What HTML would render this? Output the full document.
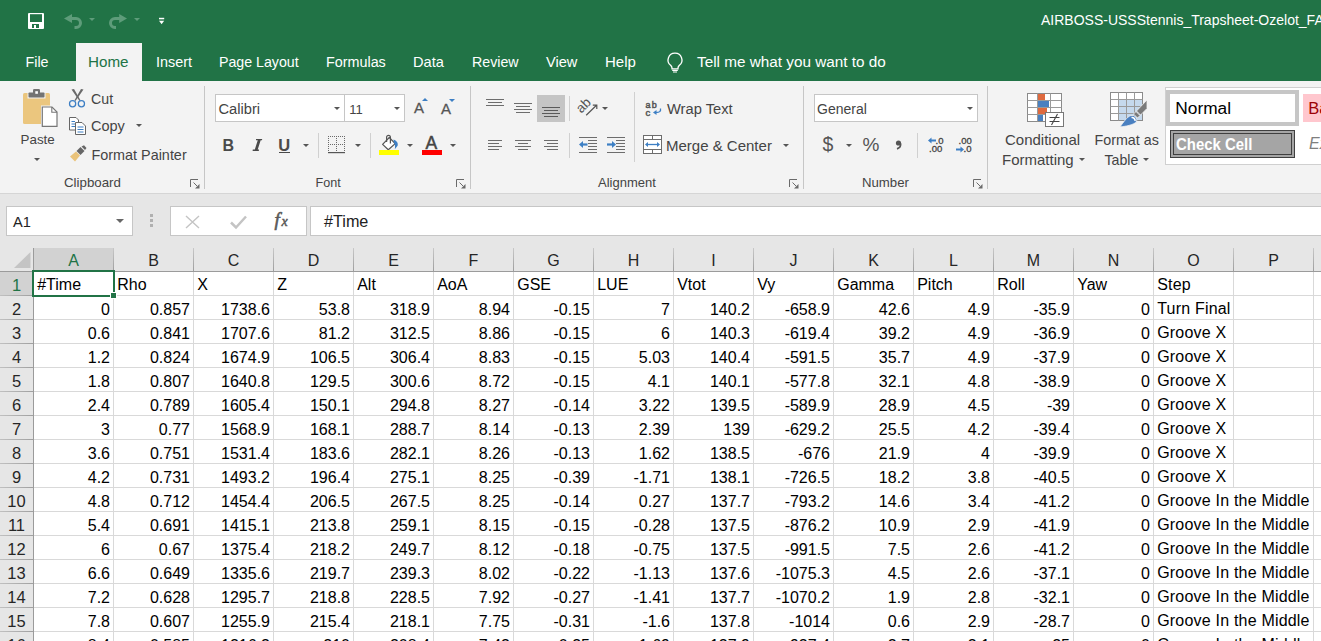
<!DOCTYPE html><html><head><meta charset="utf-8"><style>
html,body{margin:0;padding:0;}
body{width:1321px;height:641px;overflow:hidden;position:relative;background:#fff;font-family:"Liberation Sans",sans-serif;}
.t{position:absolute;white-space:nowrap;line-height:0;}
.r{position:absolute;}
.s{position:absolute;overflow:visible;}
</style></head><body>
<div class="r" style="left:0px;top:0px;width:1321px;height:81px;background:#217346;"></div>
<svg class="s" style="left:28px;top:13px;" width="16" height="16" viewBox="0 0 16 16"><path d="M1 0H15A1 1 0 0 1 16 1V15A1 1 0 0 1 15 16H1A1 1 0 0 1 0 15V1A1 1 0 0 1 1 0Z" fill="#fff"/><rect x="2" y="1.2" width="12" height="7.8" fill="#217346"/><rect x="4" y="11" width="7" height="4" fill="#217346"/><rect x="6" y="12" width="2" height="3" fill="#fff"/></svg>
<svg class="s" style="left:60px;top:10px;" width="26" height="22" viewBox="0 0 26 22"><path d="M11 8.5H16A4.5 4.5 0 0 1 16 17.5H14.5" fill="none" stroke="#5e9c7a" stroke-width="3"/><path d="M4 8.5L12 4V13Z" fill="#5e9c7a"/></svg>
<svg class="s" style="left:89.0px;top:18px;" width="6" height="3.0" viewBox="0 0 6 3.0"><path d="M0 0H6L3.0 3.0Z" fill="#5e9c7a"/></svg>
<svg class="s" style="left:104px;top:10px;" width="26" height="22" viewBox="0 0 26 22"><path d="M16 8.5H11A4.5 4.5 0 0 0 11 17.5H12" fill="none" stroke="#5e9c7a" stroke-width="3"/><path d="M23 8.5L15.2 4V13Z" fill="#5e9c7a"/></svg>
<svg class="s" style="left:134.0px;top:18px;" width="6" height="3.0" viewBox="0 0 6 3.0"><path d="M0 0H6L3.0 3.0Z" fill="#5e9c7a"/></svg>
<svg class="s" style="left:158px;top:17px;" width="7" height="8" viewBox="0 0 7 8"><rect x="1" y="0.8" width="5.2" height="1.5" fill="#fff"/><path d="M1 3.8H6.2L3.6 7.2Z" fill="#fff"/></svg>
<div class="t" style="left:1041px;top:19.65px;font-size:14px;color:#ffffff;">AIRBOSS-USSStennis_Trapsheet-Ozelot_FAC</div>
<div class="r" style="left:76px;top:43px;width:66px;height:38px;background:#f3f3f3;"></div>
<div class="t" style="left:25.5px;top:62.35px;font-size:14.3px;color:#ffffff;">File</div>
<div class="t" style="left:88px;top:62.03px;font-size:15.2px;color:#217346;">Home</div>
<div class="t" style="left:156px;top:62.31px;font-size:14.4px;color:#ffffff;">Insert</div>
<div class="t" style="left:219px;top:62.38px;font-size:14.2px;color:#ffffff;">Page Layout</div>
<div class="t" style="left:326px;top:62.33px;font-size:14.35px;color:#ffffff;">Formulas</div>
<div class="t" style="left:413px;top:62.24px;font-size:14.6px;color:#ffffff;">Data</div>
<div class="t" style="left:472px;top:62.38px;font-size:14.2px;color:#ffffff;">Review</div>
<div class="t" style="left:546px;top:62.24px;font-size:14.6px;color:#ffffff;">View</div>
<div class="t" style="left:605px;top:62.10px;font-size:15px;color:#ffffff;">Help</div>
<svg class="s" style="left:666px;top:52px;" width="18" height="21" viewBox="0 0 18 21"><path d="M9 1.2A6.8 6.8 0 0 0 4.6 13.3C5.6 14.3 6 15 6 16V16.8H12V16C12 15 12.4 14.3 13.4 13.3A6.8 6.8 0 0 0 9 1.2Z" fill="none" stroke="#fff" stroke-width="1.3"/><path d="M6.2 18.3H11.8M7 20H11" stroke="#fff" stroke-width="1.2"/></svg>
<div class="t" style="left:697px;top:62.00px;font-size:15.3px;color:#ffffff;">Tell me what you want to do</div>
<div class="r" style="left:0px;top:81px;width:1321px;height:112px;background:#f3f3f3;"></div>
<div class="r" style="left:0px;top:193px;width:1321px;height:1px;background:#d5d5d5;"></div>
<div class="r" style="left:0px;top:194px;width:1321px;height:54px;background:#e6e6e6;"></div>
<div class="r" style="left:204px;top:86px;width:1px;height:103px;background:#c6c6c6;"></div>
<div class="r" style="left:470px;top:86px;width:1px;height:103px;background:#c6c6c6;"></div>
<div class="r" style="left:803px;top:86px;width:1px;height:103px;background:#c6c6c6;"></div>
<div class="r" style="left:987px;top:86px;width:1px;height:103px;background:#c6c6c6;"></div>
<div class="t" style="left:64px;top:182.99px;font-size:13.3px;color:#444444;">Clipboard</div>
<div class="t" style="left:315.5px;top:183.23px;font-size:12.6px;color:#444444;">Font</div>
<div class="t" style="left:598px;top:183.10px;font-size:13px;color:#444444;">Alignment</div>
<div class="t" style="left:862px;top:183.03px;font-size:13.2px;color:#444444;">Number</div>
<svg class="s" style="left:190px;top:179px;" width="10" height="10" viewBox="0 0 10 10"><path d="M0.5 8V0.5H8" fill="none" stroke="#6a6a6a" stroke-width="1"/><path d="M3.5 3.5L7 7" stroke="#6a6a6a" stroke-width="1"/><path d="M5 9.5H9.5V5Z" fill="#6a6a6a"/></svg>
<svg class="s" style="left:456px;top:179px;" width="10" height="10" viewBox="0 0 10 10"><path d="M0.5 8V0.5H8" fill="none" stroke="#6a6a6a" stroke-width="1"/><path d="M3.5 3.5L7 7" stroke="#6a6a6a" stroke-width="1"/><path d="M5 9.5H9.5V5Z" fill="#6a6a6a"/></svg>
<svg class="s" style="left:789px;top:179px;" width="10" height="10" viewBox="0 0 10 10"><path d="M0.5 8V0.5H8" fill="none" stroke="#6a6a6a" stroke-width="1"/><path d="M3.5 3.5L7 7" stroke="#6a6a6a" stroke-width="1"/><path d="M5 9.5H9.5V5Z" fill="#6a6a6a"/></svg>
<svg class="s" style="left:973px;top:179px;" width="10" height="10" viewBox="0 0 10 10"><path d="M0.5 8V0.5H8" fill="none" stroke="#6a6a6a" stroke-width="1"/><path d="M3.5 3.5L7 7" stroke="#6a6a6a" stroke-width="1"/><path d="M5 9.5H9.5V5Z" fill="#6a6a6a"/></svg>
<svg class="s" style="left:22px;top:88px;" width="37" height="40" viewBox="0 0 37 40"><rect x="1" y="5" width="27" height="31" rx="1.5" fill="#ebc67e"/><path d="M5.5 4.5H23.5V10.5H5.5Z" fill="#f3f3f3"/><rect x="6.5" y="4.5" width="16" height="5" rx="0.8" fill="#737373"/><rect x="11" y="1" width="7" height="6" rx="1.2" fill="#737373"/><rect x="13.3" y="3.2" width="2.6" height="2.6" fill="#fff"/><path d="M19 17.5H30.5L36 23V39.5H19Z" fill="#f3f3f3"/><path d="M20.3 19H30L35 24V38.3H20.3Z" fill="#fff" stroke="#777" stroke-width="1.2"/><path d="M29.8 19V24.2H35" fill="none" stroke="#777" stroke-width="1.1"/></svg>
<div class="t" style="left:20.5px;top:139.96px;font-size:13.4px;color:#444444;">Paste</div>
<svg class="s" style="left:34.0px;top:158px;" width="6" height="3.0" viewBox="0 0 6 3.0"><path d="M0 0H6L3.0 3.0Z" fill="#555"/></svg>
<svg class="s" style="left:68px;top:88px;" width="19" height="20" viewBox="0 0 19 20"><path d="M3.5 1.5L6 1L12.5 12.3L11.5 13Z" fill="#6a6a6a"/><path d="M15.5 1.5L13 1L6.5 12.3L7.5 13Z" fill="#6a6a6a"/><circle cx="4.6" cy="15.7" r="3.1" fill="none" stroke="#3d7fc4" stroke-width="1.25"/><circle cx="13.4" cy="15.7" r="3.1" fill="none" stroke="#3d7fc4" stroke-width="1.25"/></svg>
<div class="t" style="left:91px;top:99.08px;font-size:14.2px;color:#444444;">Cut</div>
<svg class="s" style="left:68px;top:116px;" width="19" height="20" viewBox="0 0 19 20"><path d="M1.5 1.5H8L10.5 4V14H1.5Z" fill="#fff" stroke="#666"/><path d="M7.5 6.5H14L17.5 10V18.5H7.5Z" fill="#fff" stroke="#666"/><path d="M3.5 5.5H7M3.5 8H7M3.5 10.5H7M9.5 11H15.5M9.5 13.5H15.5M9.5 16H15.5" stroke="#3d7fc4" stroke-width="1"/></svg>
<div class="t" style="left:91px;top:126.48px;font-size:14.5px;color:#444444;">Copy</div>
<svg class="s" style="left:135.5px;top:124px;" width="6" height="3.0" viewBox="0 0 6 3.0"><path d="M0 0H6L3.0 3.0Z" fill="#555"/></svg>
<svg class="s" style="left:69px;top:145px;" width="18" height="17" viewBox="0 0 18 17"><path d="M1 11.5L7 6.5L11 10.5L6 16.5Z" fill="#eac37a"/><path d="M7.5 6L11.5 2L15.5 6L11.5 10Z" fill="#666"/><path d="M12.5 1.5L15 0.2L17.5 3L16 5Z" fill="#666"/></svg>
<div class="t" style="left:91.5px;top:154.51px;font-size:14.4px;color:#444444;">Format Painter</div>
<div class="r" style="left:215px;top:94px;width:130px;height:28px;background:#fff;box-sizing:border-box;border:1px solid #c6c6c6;"></div>
<div class="r" style="left:344px;top:94px;width:61px;height:28px;background:#fff;box-sizing:border-box;border:1px solid #c6c6c6;"></div>
<div class="t" style="left:218.5px;top:108.91px;font-size:14.7px;color:#444444;">Calibri</div>
<svg class="s" style="left:334.0px;top:107px;" width="6" height="3.0" viewBox="0 0 6 3.0"><path d="M0 0H6L3.0 3.0Z" fill="#555"/></svg>
<div class="t" style="left:349.3px;top:109.50px;font-size:13px;color:#444444;">11</div>
<svg class="s" style="left:394.0px;top:107px;" width="6" height="3.0" viewBox="0 0 6 3.0"><path d="M0 0H6L3.0 3.0Z" fill="#555"/></svg>
<div class="t" style="left:414px;top:108.10px;font-size:15px;color:#555;-webkit-text-stroke:0.3px #555;">A</div>
<svg class="s" style="left:422px;top:98px;" width="6" height="3" viewBox="0 0 6 3"><path d="M0 3H6L3 0Z" fill="#3d7fc4"/></svg>
<div class="t" style="left:441px;top:108.60px;font-size:15px;color:#555;-webkit-text-stroke:0.3px #555;">A</div>
<svg class="s" style="left:449.3px;top:99px;" width="6" height="3" viewBox="0 0 6 3"><path d="M0 0H6L3 3Z" fill="#3d7fc4"/></svg>
<div class="t" style="left:222.5px;top:146.26px;font-size:16px;color:#4a4a4a;font-weight:bold;">B</div>
<svg class="s" style="left:252px;top:138px;" width="11" height="14" viewBox="0 0 11 14"><path d="M4 1H10.2L10 2.3H4Z M0.8 11.6H7L6.8 12.9H0.6Z M6 1.5H8.9L5.4 12.4H2.5Z" fill="#4a4a4a"/></svg>
<div class="t" style="left:278.3px;top:144.88px;font-size:16.5px;color:#4a4a4a;font-weight:bold;">U</div>
<div class="r" style="left:279px;top:152px;width:11px;height:1px;background:#4a4a4a;"></div>
<svg class="s" style="left:303.0px;top:144px;" width="6" height="3.0" viewBox="0 0 6 3.0"><path d="M0 0H6L3.0 3.0Z" fill="#555"/></svg>
<div class="r" style="left:318px;top:133px;width:1px;height:25px;background:#d0d0d0;"></div>
<svg class="s" style="left:328px;top:136px;" width="18" height="17" viewBox="0 0 18 17"><g fill="#6a6a6a"><rect x="0" y="0" width="1" height="1"/><rect x="0" y="8" width="1" height="1"/><rect x="2" y="0" width="1" height="1"/><rect x="2" y="8" width="1" height="1"/><rect x="4" y="0" width="1" height="1"/><rect x="4" y="8" width="1" height="1"/><rect x="6" y="0" width="1" height="1"/><rect x="6" y="8" width="1" height="1"/><rect x="8" y="0" width="1" height="1"/><rect x="8" y="8" width="1" height="1"/><rect x="10" y="0" width="1" height="1"/><rect x="10" y="8" width="1" height="1"/><rect x="12" y="0" width="1" height="1"/><rect x="12" y="8" width="1" height="1"/><rect x="14" y="0" width="1" height="1"/><rect x="14" y="8" width="1" height="1"/><rect x="16" y="0" width="1" height="1"/><rect x="16" y="8" width="1" height="1"/><rect x="0" y="2" width="1" height="1"/><rect x="8" y="2" width="1" height="1"/><rect x="16" y="2" width="1" height="1"/><rect x="0" y="4" width="1" height="1"/><rect x="8" y="4" width="1" height="1"/><rect x="16" y="4" width="1" height="1"/><rect x="0" y="6" width="1" height="1"/><rect x="8" y="6" width="1" height="1"/><rect x="16" y="6" width="1" height="1"/><rect x="0" y="10" width="1" height="1"/><rect x="8" y="10" width="1" height="1"/><rect x="16" y="10" width="1" height="1"/><rect x="0" y="12" width="1" height="1"/><rect x="8" y="12" width="1" height="1"/><rect x="16" y="12" width="1" height="1"/><rect x="0" y="14" width="1" height="1"/><rect x="8" y="14" width="1" height="1"/><rect x="16" y="14" width="1" height="1"/></g><rect x="0" y="16" width="17" height="1.2" fill="#555"/></svg>
<svg class="s" style="left:355.0px;top:144px;" width="6" height="3.0" viewBox="0 0 6 3.0"><path d="M0 0H6L3.0 3.0Z" fill="#555"/></svg>
<div class="r" style="left:370px;top:133px;width:1px;height:25px;background:#d0d0d0;"></div>
<svg class="s" style="left:379px;top:133px;" width="21" height="22" viewBox="0 0 21 22"><path d="M3.6 11.4L10.3 4.5L16.2 10.6L9.3 16.8Z" fill="#fff" stroke="#555" stroke-width="1.2" stroke-linejoin="round"/><path d="M7.6 9V4.3A1.9 1.9 0 0 1 11.4 4.3V10.5" fill="none" stroke="#555" stroke-width="1.2"/><path d="M14.5 6.5C17.5 7.5 19.5 10 18.6 12.8L15.8 16.2C16.4 13.5 16 11 14.8 9.3Z" fill="#3d7fc4"/><rect x="0" y="17" width="20" height="5" fill="#ffff00"/></svg>
<svg class="s" style="left:407.0px;top:144px;" width="6" height="3.0" viewBox="0 0 6 3.0"><path d="M0 0H6L3.0 3.0Z" fill="#555"/></svg>
<div class="t" style="left:425.5px;top:142.94px;font-size:17.5px;color:#444;-webkit-text-stroke:0.5px #444;">A</div>
<div class="r" style="left:422px;top:150px;width:20px;height:5px;background:#ff0000;"></div>
<svg class="s" style="left:450.0px;top:144px;" width="6" height="3.0" viewBox="0 0 6 3.0"><path d="M0 0H6L3.0 3.0Z" fill="#555"/></svg>
<div class="r" style="left:486px;top:99px;width:18px;height:1px;background:#6d6d6d;"></div>
<div class="r" style="left:488px;top:102px;width:14px;height:1px;background:#6d6d6d;"></div>
<div class="r" style="left:486px;top:105px;width:18px;height:1px;background:#6d6d6d;"></div>
<div class="r" style="left:514px;top:103px;width:18px;height:1px;background:#6d6d6d;"></div>
<div class="r" style="left:516px;top:106px;width:14px;height:1px;background:#6d6d6d;"></div>
<div class="r" style="left:514px;top:109px;width:18px;height:1px;background:#6d6d6d;"></div>
<div class="r" style="left:516px;top:112px;width:14px;height:1px;background:#6d6d6d;"></div>
<div class="r" style="left:537px;top:95px;width:28px;height:27px;background:#c5c5c5;"></div>
<div class="r" style="left:542px;top:107px;width:18px;height:1px;background:#5a5a5a;"></div>
<div class="r" style="left:544px;top:110px;width:14px;height:1px;background:#5a5a5a;"></div>
<div class="r" style="left:542px;top:113px;width:18px;height:1px;background:#5a5a5a;"></div>
<div class="r" style="left:544px;top:116px;width:14px;height:1px;background:#5a5a5a;"></div>
<div class="r" style="left:569px;top:96px;width:1px;height:25px;background:#d0d0d0;"></div>
<svg class="s" style="left:576px;top:97px;" width="24" height="20" viewBox="0 0 24 20"><text x="0" y="0" font-family="Liberation Sans" font-size="13.5" fill="#555" transform="translate(5.2 16.8) rotate(-45)" style="-webkit-text-stroke:0.6px #555">ab</text><path d="M10.2 18.3L20.5 8.2M16.8 8.2H20.8V12" fill="none" stroke="#555" stroke-width="1.2"/></svg>
<svg class="s" style="left:602.0px;top:107px;" width="6" height="3.0" viewBox="0 0 6 3.0"><path d="M0 0H6L3.0 3.0Z" fill="#555"/></svg>
<div class="r" style="left:488px;top:140px;width:14px;height:1px;background:#6d6d6d;"></div>
<div class="r" style="left:488px;top:143px;width:11px;height:1px;background:#6d6d6d;"></div>
<div class="r" style="left:488px;top:146px;width:14px;height:1px;background:#6d6d6d;"></div>
<div class="r" style="left:488px;top:149px;width:11px;height:1px;background:#6d6d6d;"></div>
<div class="r" style="left:515px;top:140px;width:16px;height:1px;background:#6d6d6d;"></div>
<div class="r" style="left:518px;top:143px;width:10px;height:1px;background:#6d6d6d;"></div>
<div class="r" style="left:515px;top:146px;width:16px;height:1px;background:#6d6d6d;"></div>
<div class="r" style="left:518px;top:149px;width:10px;height:1px;background:#6d6d6d;"></div>
<div class="r" style="left:544px;top:140px;width:14px;height:1px;background:#6d6d6d;"></div>
<div class="r" style="left:547px;top:143px;width:11px;height:1px;background:#6d6d6d;"></div>
<div class="r" style="left:544px;top:146px;width:14px;height:1px;background:#6d6d6d;"></div>
<div class="r" style="left:547px;top:149px;width:11px;height:1px;background:#6d6d6d;"></div>
<div class="r" style="left:569px;top:133px;width:1px;height:25px;background:#d0d0d0;"></div>
<div class="r" style="left:579px;top:137px;width:18px;height:1px;background:#6d6d6d;"></div>
<div class="r" style="left:588px;top:140px;width:9px;height:1px;background:#6d6d6d;"></div>
<div class="r" style="left:588px;top:143px;width:9px;height:1px;background:#6d6d6d;"></div>
<div class="r" style="left:588px;top:146px;width:9px;height:1px;background:#6d6d6d;"></div>
<div class="r" style="left:588px;top:149px;width:9px;height:1px;background:#6d6d6d;"></div>
<div class="r" style="left:579px;top:152px;width:18px;height:1px;background:#6d6d6d;"></div>
<svg class="s" style="left:579px;top:141px;" width="9" height="7" viewBox="0 0 9 7"><path d="M0 3.5L4 0V7Z" fill="#3d7fc4"/><path d="M3 3.5H8.5" stroke="#3d7fc4" stroke-width="2.2"/></svg>
<div class="r" style="left:607px;top:137px;width:18px;height:1px;background:#6d6d6d;"></div>
<div class="r" style="left:616px;top:140px;width:9px;height:1px;background:#6d6d6d;"></div>
<div class="r" style="left:616px;top:143px;width:9px;height:1px;background:#6d6d6d;"></div>
<div class="r" style="left:616px;top:146px;width:9px;height:1px;background:#6d6d6d;"></div>
<div class="r" style="left:616px;top:149px;width:9px;height:1px;background:#6d6d6d;"></div>
<div class="r" style="left:607px;top:152px;width:18px;height:1px;background:#6d6d6d;"></div>
<svg class="s" style="left:607px;top:141px;" width="9" height="7" viewBox="0 0 9 7"><path d="M9 3.5L5 0V7Z" fill="#3d7fc4"/><path d="M0 3.5H6" stroke="#3d7fc4" stroke-width="2.2"/></svg>
<div class="r" style="left:634px;top:92px;width:1px;height:70px;background:#d0d0d0;"></div>
<div class="t" style="left:645.5px;top:104.68px;font-size:9px;color:#555;-webkit-text-stroke:0.5px #555;letter-spacing:1.3px;">ab</div>
<div class="t" style="left:645.5px;top:112.51px;font-size:9.5px;color:#555;-webkit-text-stroke:0.5px #555;">c</div>
<svg class="s" style="left:652px;top:108px;" width="10" height="7" viewBox="0 0 10 7"><path d="M8.5 0.5C9 3.5 7.5 4.5 4 4.5" fill="none" stroke="#3d7fc4" stroke-width="1.3"/><path d="M1 4.5L4.5 2V7Z" fill="#3d7fc4"/></svg>
<div class="t" style="left:667px;top:108.91px;font-size:14.7px;color:#444444;">Wrap Text</div>
<svg class="s" style="left:643px;top:135px;" width="19" height="19" viewBox="0 0 19 19"><rect x="0.5" y="0.5" width="18" height="18" fill="#fff" stroke="#6d6d6d"/><path d="M0.5 4.5H18.5M0.5 14.5H18.5M9.5 0.5V4.5M9.5 14.5V18.5" stroke="#6d6d6d" stroke-width="1"/><path d="M4 9.5H15" stroke="#3d7fc4" stroke-width="1.3"/><path d="M2 9.5L5 7V12ZM17 9.5L14 7V12Z" fill="#3d7fc4"/></svg>
<div class="t" style="left:666px;top:145.60px;font-size:15px;color:#444444;">Merge &amp; Center</div>
<svg class="s" style="left:783.0px;top:144px;" width="6" height="3.0" viewBox="0 0 6 3.0"><path d="M0 0H6L3.0 3.0Z" fill="#555"/></svg>
<div class="r" style="left:814px;top:94px;width:164px;height:28px;background:#fff;box-sizing:border-box;border:1px solid #c6c6c6;"></div>
<div class="t" style="left:817px;top:108.85px;font-size:14px;color:#444444;">General</div>
<svg class="s" style="left:966.5px;top:107px;" width="6" height="3.0" viewBox="0 0 6 3.0"><path d="M0 0H6L3.0 3.0Z" fill="#555"/></svg>
<div class="t" style="left:822.5px;top:144.24px;font-size:19.5px;color:#555;">$</div>
<svg class="s" style="left:846.0px;top:144px;" width="6" height="3.0" viewBox="0 0 6 3.0"><path d="M0 0H6L3.0 3.0Z" fill="#555"/></svg>
<div class="t" style="left:862.5px;top:145.42px;font-size:19px;color:#555;">%</div>
<svg class="s" style="left:895px;top:140px;" width="7" height="9" viewBox="0 0 7 9"><circle cx="3.5" cy="3" r="2.6" fill="#555"/><path d="M5.5 3.5C6 6 4.5 8 2 8.8" fill="none" stroke="#555" stroke-width="1.8"/></svg>
<div class="r" style="left:917px;top:133px;width:1px;height:25px;background:#d0d0d0;"></div>
<svg class="s" style="left:928px;top:137px;" width="8" height="7" viewBox="0 0 8 7"><path d="M0 3.5L3.5 0.5V6.5Z" fill="#3d7fc4"/><path d="M2.5 3.5H8" stroke="#3d7fc4" stroke-width="2"/></svg>
<div class="t" style="left:935.5px;top:140.91px;font-size:9.5px;color:#444;-webkit-text-stroke:0.3px #444;">.0</div>
<div class="t" style="left:929px;top:149.11px;font-size:9.5px;color:#444;-webkit-text-stroke:0.3px #444;">.00</div>
<div class="t" style="left:958.5px;top:140.91px;font-size:9.5px;color:#444;-webkit-text-stroke:0.3px #444;">.00</div>
<svg class="s" style="left:956px;top:146px;" width="8" height="7" viewBox="0 0 8 7"><path d="M8 3.5L4.5 0.5V6.5Z" fill="#3d7fc4"/><path d="M0 3.5H5.5" stroke="#3d7fc4" stroke-width="2"/></svg>
<div class="t" style="left:963.5px;top:149.11px;font-size:9.5px;color:#444;-webkit-text-stroke:0.3px #444;">.0</div>
<svg class="s" style="left:1027px;top:93px;" width="38" height="35" viewBox="0 0 38 35"><rect x="0.5" y="0.5" width="34" height="28" fill="#fff" stroke="#8a8a8a"/><rect x="11" y="1" width="7" height="6" fill="#df6a3f"/><rect x="11" y="8" width="11" height="6" fill="#4a80c0"/><rect x="11" y="15" width="9" height="6" fill="#df6a3f"/><rect x="11" y="22" width="5" height="6" fill="#4a80c0"/><path d="M0.5 7.5H34.5M0.5 14.5H34.5M0.5 21.5H34.5M10.5 0.5V28.5M23.5 0.5V28.5" stroke="#9a9a9a" stroke-width="1" fill="none"/><rect x="18.5" y="19.5" width="18" height="14" fill="#fff" stroke="#777"/><path d="M22.5 24.5H32.5M22.5 28.5H32.5M30.5 21L24.5 32" stroke="#444" stroke-width="1.1" fill="none"/></svg>
<div class="t" style="left:1005px;top:139.70px;font-size:15px;color:#444444;">Conditional</div>
<div class="t" style="left:1002px;top:159.50px;font-size:15px;color:#444444;">Formatting</div>
<svg class="s" style="left:1079.0px;top:158px;" width="6" height="3.0" viewBox="0 0 6 3.0"><path d="M0 0H6L3.0 3.0Z" fill="#555"/></svg>
<svg class="s" style="left:1110px;top:92px;" width="40" height="36" viewBox="0 0 40 36"><rect x="0.5" y="0.5" width="32" height="28" fill="#fff"/><rect x="8" y="7" width="25" height="22" fill="#c5d9ed"/><rect x="0.5" y="0.5" width="32" height="28" fill="none" stroke="#8a8a8a"/><path d="M0.5 7.5H32.5M0.5 14.5H32.5M0.5 21.5H32.5M8.5 0.5V28.5M16.5 0.5V28.5M24.5 0.5V28.5" stroke="#9a9a9a" stroke-width="1" fill="none"/><path d="M37 8L37 16.5L30.5 23L26.5 19Z" fill="#7a7a7a" stroke="#f3f3f3" stroke-width="0.8"/><path d="M26 19.5L30 23.5L27.5 26L23.5 22Z" fill="#7a7a7a" stroke="#f3f3f3" stroke-width="0.8"/><path d="M10 34.8C13.5 30.5 16.5 25 21 23.5A4.8 4.8 0 0 1 26.5 30C23 33 15.5 34.5 10 34.8Z" fill="#4a80c0" stroke="#f3f3f3" stroke-width="0.8"/><path d="M21.5 25.5A3 3 0 0 1 25 29" stroke="#fff" stroke-width="1.6" fill="none"/></svg>
<div class="t" style="left:1094.5px;top:139.95px;font-size:14.3px;color:#444444;">Format as</div>
<div class="t" style="left:1104.5px;top:159.78px;font-size:14.2px;color:#444444;">Table</div>
<svg class="s" style="left:1143.0px;top:158px;" width="6" height="3.0" viewBox="0 0 6 3.0"><path d="M0 0H6L3.0 3.0Z" fill="#555"/></svg>
<div class="r" style="left:1165px;top:87px;width:160px;height:78px;background:#fff;box-sizing:border-box;border:1px solid #d0d0d0;"></div>
<div class="r" style="left:1166px;top:90px;width:133px;height:36px;background:#fff;box-sizing:border-box;border:4px solid #c6c6c6;"></div>
<div class="t" style="left:1175.3px;top:108.31px;font-size:17.3px;color:#000;">Normal</div>
<div class="r" style="left:1303px;top:94px;width:30px;height:28px;background:#ffc7ce;"></div>
<div class="t" style="left:1308.3px;top:108.08px;font-size:16.5px;color:#9c0006;">Bad</div>
<div class="r" style="left:1170px;top:130px;width:125px;height:28px;background:#a5a5a5;box-sizing:border-box;border:4px double #3f3f3f;"></div>
<div class="t" style="left:1175.5px;top:144.08px;font-size:16.5px;color:#ffffff;font-weight:bold;transform:scaleX(0.905);transform-origin:0 0;">Check Cell</div>
<div class="t" style="left:1309px;top:144.26px;font-size:16px;color:#7f7f7f;font-style:italic;">Explanatory</div>
<div class="r" style="left:6px;top:206px;width:127px;height:30px;background:#fff;box-sizing:border-box;border:1px solid #c6c6c6;"></div>
<div class="t" style="left:13px;top:221.74px;font-size:14.6px;color:#222;">A1</div>
<svg class="s" style="left:116.0px;top:219px;" width="8" height="4.0" viewBox="0 0 8 4.0"><path d="M0 0H8L4.0 4.0Z" fill="#666"/></svg>
<div class="r" style="left:150px;top:214px;width:3px;height:3px;background:#b0b0b0;"></div>
<div class="r" style="left:150px;top:219px;width:3px;height:3px;background:#b0b0b0;"></div>
<div class="r" style="left:150px;top:224px;width:3px;height:3px;background:#b0b0b0;"></div>
<div class="r" style="left:170px;top:206px;width:137px;height:30px;background:#fff;box-sizing:border-box;border:1px solid #c6c6c6;"></div>
<svg class="s" style="left:185px;top:215px;" width="15" height="14" viewBox="0 0 15 14"><path d="M1 1L14 13M14 1L1 13" stroke="#c4c4c4" stroke-width="1.4"/></svg>
<svg class="s" style="left:230px;top:215px;" width="17" height="14" viewBox="0 0 17 14"><path d="M1 7.5L6 12.5L16 1.5" fill="none" stroke="#c4c4c4" stroke-width="2.5"/></svg>
<div class="t" style="left:274.5px;top:219.92px;font-size:19px;color:#5a5a5a;font-style:italic;font-family:'Liberation Serif',serif;-webkit-text-stroke:0.6px #5a5a5a;">f</div>
<div class="t" style="left:281.5px;top:221.65px;font-size:14px;color:#5a5a5a;font-style:italic;font-family:'Liberation Serif',serif;-webkit-text-stroke:0.5px #5a5a5a;">x</div>
<div class="r" style="left:310px;top:206px;width:1011px;height:30px;background:#fff;box-sizing:border-box;border:1px solid #c6c6c6;border-right:none;"></div>
<div class="t" style="left:324px;top:221.19px;font-size:16.2px;color:#222;">#Time</div>
<div class="r" style="left:0px;top:248px;width:1321px;height:23px;background:#e6e6e6;"></div>
<div class="r" style="left:0px;top:272px;width:33px;height:369px;background:#e6e6e6;"></div>
<div class="r" style="left:34px;top:272px;width:1287px;height:369px;background:#ffffff;"></div>
<div class="r" style="left:34px;top:248px;width:79px;height:23px;background:#d2d2d2;"></div>
<div class="r" style="left:0px;top:272px;width:33px;height:23px;background:#d2d2d2;"></div>
<svg class="s" style="left:14px;top:252px;" width="17" height="16" viewBox="0 0 17 16"><path d="M16.5 0V16H0Z" fill="#c4c4c4"/></svg>
<div class="r" style="left:113px;top:248px;width:1px;height:23px;background:linear-gradient(#c8c8c8,#9e9e9e);"></div>
<div class="t" style="left:-126.5px;width:400px;text-align:center;top:260.96px;font-size:16px;color:#217346;">A</div>
<div class="r" style="left:193px;top:248px;width:1px;height:23px;background:linear-gradient(#c8c8c8,#9e9e9e);"></div>
<div class="t" style="left:-46.5px;width:400px;text-align:center;top:260.96px;font-size:16px;color:#262626;">B</div>
<div class="r" style="left:273px;top:248px;width:1px;height:23px;background:linear-gradient(#c8c8c8,#9e9e9e);"></div>
<div class="t" style="left:33.5px;width:400px;text-align:center;top:260.96px;font-size:16px;color:#262626;">C</div>
<div class="r" style="left:353px;top:248px;width:1px;height:23px;background:linear-gradient(#c8c8c8,#9e9e9e);"></div>
<div class="t" style="left:113.5px;width:400px;text-align:center;top:260.96px;font-size:16px;color:#262626;">D</div>
<div class="r" style="left:433px;top:248px;width:1px;height:23px;background:linear-gradient(#c8c8c8,#9e9e9e);"></div>
<div class="t" style="left:193.5px;width:400px;text-align:center;top:260.96px;font-size:16px;color:#262626;">E</div>
<div class="r" style="left:513px;top:248px;width:1px;height:23px;background:linear-gradient(#c8c8c8,#9e9e9e);"></div>
<div class="t" style="left:273.5px;width:400px;text-align:center;top:260.96px;font-size:16px;color:#262626;">F</div>
<div class="r" style="left:593px;top:248px;width:1px;height:23px;background:linear-gradient(#c8c8c8,#9e9e9e);"></div>
<div class="t" style="left:353.5px;width:400px;text-align:center;top:260.96px;font-size:16px;color:#262626;">G</div>
<div class="r" style="left:673px;top:248px;width:1px;height:23px;background:linear-gradient(#c8c8c8,#9e9e9e);"></div>
<div class="t" style="left:433.5px;width:400px;text-align:center;top:260.96px;font-size:16px;color:#262626;">H</div>
<div class="r" style="left:753px;top:248px;width:1px;height:23px;background:linear-gradient(#c8c8c8,#9e9e9e);"></div>
<div class="t" style="left:513.5px;width:400px;text-align:center;top:260.96px;font-size:16px;color:#262626;">I</div>
<div class="r" style="left:833px;top:248px;width:1px;height:23px;background:linear-gradient(#c8c8c8,#9e9e9e);"></div>
<div class="t" style="left:593.5px;width:400px;text-align:center;top:260.96px;font-size:16px;color:#262626;">J</div>
<div class="r" style="left:913px;top:248px;width:1px;height:23px;background:linear-gradient(#c8c8c8,#9e9e9e);"></div>
<div class="t" style="left:673.5px;width:400px;text-align:center;top:260.96px;font-size:16px;color:#262626;">K</div>
<div class="r" style="left:993px;top:248px;width:1px;height:23px;background:linear-gradient(#c8c8c8,#9e9e9e);"></div>
<div class="t" style="left:753.5px;width:400px;text-align:center;top:260.96px;font-size:16px;color:#262626;">L</div>
<div class="r" style="left:1073px;top:248px;width:1px;height:23px;background:linear-gradient(#c8c8c8,#9e9e9e);"></div>
<div class="t" style="left:833.5px;width:400px;text-align:center;top:260.96px;font-size:16px;color:#262626;">M</div>
<div class="r" style="left:1153px;top:248px;width:1px;height:23px;background:linear-gradient(#c8c8c8,#9e9e9e);"></div>
<div class="t" style="left:913.5px;width:400px;text-align:center;top:260.96px;font-size:16px;color:#262626;">N</div>
<div class="r" style="left:1233px;top:248px;width:1px;height:23px;background:linear-gradient(#c8c8c8,#9e9e9e);"></div>
<div class="t" style="left:993.5px;width:400px;text-align:center;top:260.96px;font-size:16px;color:#262626;">O</div>
<div class="r" style="left:1313px;top:248px;width:1px;height:23px;background:linear-gradient(#c8c8c8,#9e9e9e);"></div>
<div class="t" style="left:1073.5px;width:400px;text-align:center;top:260.96px;font-size:16px;color:#262626;">P</div>
<div class="r" style="left:0px;top:271px;width:1321px;height:1px;background:#9b9b9b;"></div>
<div class="r" style="left:33px;top:248px;width:1px;height:393px;background:#9b9b9b;"></div>
<div class="r" style="left:34px;top:295px;width:1287px;height:1px;background:#d9d9d9;"></div>
<div class="r" style="left:0px;top:295px;width:33px;height:1px;background:linear-gradient(90deg,#c0c0c0,#a0a0a0);"></div>
<div class="r" style="left:34px;top:319px;width:1287px;height:1px;background:#d9d9d9;"></div>
<div class="r" style="left:0px;top:319px;width:33px;height:1px;background:linear-gradient(90deg,#c0c0c0,#a0a0a0);"></div>
<div class="r" style="left:34px;top:343px;width:1287px;height:1px;background:#d9d9d9;"></div>
<div class="r" style="left:0px;top:343px;width:33px;height:1px;background:linear-gradient(90deg,#c0c0c0,#a0a0a0);"></div>
<div class="r" style="left:34px;top:367px;width:1287px;height:1px;background:#d9d9d9;"></div>
<div class="r" style="left:0px;top:367px;width:33px;height:1px;background:linear-gradient(90deg,#c0c0c0,#a0a0a0);"></div>
<div class="r" style="left:34px;top:391px;width:1287px;height:1px;background:#d9d9d9;"></div>
<div class="r" style="left:0px;top:391px;width:33px;height:1px;background:linear-gradient(90deg,#c0c0c0,#a0a0a0);"></div>
<div class="r" style="left:34px;top:415px;width:1287px;height:1px;background:#d9d9d9;"></div>
<div class="r" style="left:0px;top:415px;width:33px;height:1px;background:linear-gradient(90deg,#c0c0c0,#a0a0a0);"></div>
<div class="r" style="left:34px;top:439px;width:1287px;height:1px;background:#d9d9d9;"></div>
<div class="r" style="left:0px;top:439px;width:33px;height:1px;background:linear-gradient(90deg,#c0c0c0,#a0a0a0);"></div>
<div class="r" style="left:34px;top:463px;width:1287px;height:1px;background:#d9d9d9;"></div>
<div class="r" style="left:0px;top:463px;width:33px;height:1px;background:linear-gradient(90deg,#c0c0c0,#a0a0a0);"></div>
<div class="r" style="left:34px;top:487px;width:1287px;height:1px;background:#d9d9d9;"></div>
<div class="r" style="left:0px;top:487px;width:33px;height:1px;background:linear-gradient(90deg,#c0c0c0,#a0a0a0);"></div>
<div class="r" style="left:34px;top:511px;width:1287px;height:1px;background:#d9d9d9;"></div>
<div class="r" style="left:0px;top:511px;width:33px;height:1px;background:linear-gradient(90deg,#c0c0c0,#a0a0a0);"></div>
<div class="r" style="left:34px;top:535px;width:1287px;height:1px;background:#d9d9d9;"></div>
<div class="r" style="left:0px;top:535px;width:33px;height:1px;background:linear-gradient(90deg,#c0c0c0,#a0a0a0);"></div>
<div class="r" style="left:34px;top:559px;width:1287px;height:1px;background:#d9d9d9;"></div>
<div class="r" style="left:0px;top:559px;width:33px;height:1px;background:linear-gradient(90deg,#c0c0c0,#a0a0a0);"></div>
<div class="r" style="left:34px;top:583px;width:1287px;height:1px;background:#d9d9d9;"></div>
<div class="r" style="left:0px;top:583px;width:33px;height:1px;background:linear-gradient(90deg,#c0c0c0,#a0a0a0);"></div>
<div class="r" style="left:34px;top:607px;width:1287px;height:1px;background:#d9d9d9;"></div>
<div class="r" style="left:0px;top:607px;width:33px;height:1px;background:linear-gradient(90deg,#c0c0c0,#a0a0a0);"></div>
<div class="r" style="left:34px;top:631px;width:1287px;height:1px;background:#d9d9d9;"></div>
<div class="r" style="left:0px;top:631px;width:33px;height:1px;background:linear-gradient(90deg,#c0c0c0,#a0a0a0);"></div>
<div class="r" style="left:34px;top:655px;width:1287px;height:1px;background:#d9d9d9;"></div>
<div class="r" style="left:0px;top:655px;width:33px;height:1px;background:linear-gradient(90deg,#c0c0c0,#a0a0a0);"></div>
<div class="r" style="left:113px;top:272px;width:1px;height:369px;background:#d9d9d9;"></div>
<div class="r" style="left:193px;top:272px;width:1px;height:369px;background:#d9d9d9;"></div>
<div class="r" style="left:273px;top:272px;width:1px;height:369px;background:#d9d9d9;"></div>
<div class="r" style="left:353px;top:272px;width:1px;height:369px;background:#d9d9d9;"></div>
<div class="r" style="left:433px;top:272px;width:1px;height:369px;background:#d9d9d9;"></div>
<div class="r" style="left:513px;top:272px;width:1px;height:369px;background:#d9d9d9;"></div>
<div class="r" style="left:593px;top:272px;width:1px;height:369px;background:#d9d9d9;"></div>
<div class="r" style="left:673px;top:272px;width:1px;height:369px;background:#d9d9d9;"></div>
<div class="r" style="left:753px;top:272px;width:1px;height:369px;background:#d9d9d9;"></div>
<div class="r" style="left:833px;top:272px;width:1px;height:369px;background:#d9d9d9;"></div>
<div class="r" style="left:913px;top:272px;width:1px;height:369px;background:#d9d9d9;"></div>
<div class="r" style="left:993px;top:272px;width:1px;height:369px;background:#d9d9d9;"></div>
<div class="r" style="left:1073px;top:272px;width:1px;height:369px;background:#d9d9d9;"></div>
<div class="r" style="left:1153px;top:272px;width:1px;height:369px;background:#d9d9d9;"></div>
<div class="r" style="left:1233px;top:272px;width:1px;height:216px;background:#d9d9d9;"></div>
<div class="r" style="left:1313px;top:272px;width:1px;height:369px;background:#d9d9d9;"></div>
<div class="t" style="left:-183.5px;width:400px;text-align:center;top:285.28px;font-size:16.5px;color:#217346;">1</div>
<div class="t" style="left:-183.5px;width:400px;text-align:center;top:309.28px;font-size:16.5px;color:#262626;">2</div>
<div class="t" style="left:-183.5px;width:400px;text-align:center;top:333.28px;font-size:16.5px;color:#262626;">3</div>
<div class="t" style="left:-183.5px;width:400px;text-align:center;top:357.28px;font-size:16.5px;color:#262626;">4</div>
<div class="t" style="left:-183.5px;width:400px;text-align:center;top:381.28px;font-size:16.5px;color:#262626;">5</div>
<div class="t" style="left:-183.5px;width:400px;text-align:center;top:405.28px;font-size:16.5px;color:#262626;">6</div>
<div class="t" style="left:-183.5px;width:400px;text-align:center;top:429.28px;font-size:16.5px;color:#262626;">7</div>
<div class="t" style="left:-183.5px;width:400px;text-align:center;top:453.28px;font-size:16.5px;color:#262626;">8</div>
<div class="t" style="left:-183.5px;width:400px;text-align:center;top:477.28px;font-size:16.5px;color:#262626;">9</div>
<div class="t" style="left:-183.5px;width:400px;text-align:center;top:501.28px;font-size:16.5px;color:#262626;">10</div>
<div class="t" style="left:-183.5px;width:400px;text-align:center;top:525.28px;font-size:16.5px;color:#262626;">11</div>
<div class="t" style="left:-183.5px;width:400px;text-align:center;top:549.28px;font-size:16.5px;color:#262626;">12</div>
<div class="t" style="left:-183.5px;width:400px;text-align:center;top:573.28px;font-size:16.5px;color:#262626;">13</div>
<div class="t" style="left:-183.5px;width:400px;text-align:center;top:597.28px;font-size:16.5px;color:#262626;">14</div>
<div class="t" style="left:-183.5px;width:400px;text-align:center;top:621.28px;font-size:16.5px;color:#262626;">15</div>
<div class="t" style="left:-183.5px;width:400px;text-align:center;top:645.28px;font-size:16.5px;color:#262626;">16</div>
<div class="t" style="left:37.2px;top:285.46px;font-size:16px;color:#000;">#Time</div>
<div class="t" style="left:117.2px;top:285.46px;font-size:16px;color:#000;">Rho</div>
<div class="t" style="left:197.2px;top:285.46px;font-size:16px;color:#000;">X</div>
<div class="t" style="left:277.2px;top:285.46px;font-size:16px;color:#000;">Z</div>
<div class="t" style="left:357.2px;top:285.46px;font-size:16px;color:#000;">Alt</div>
<div class="t" style="left:437.2px;top:285.46px;font-size:16px;color:#000;">AoA</div>
<div class="t" style="left:517.2px;top:285.46px;font-size:16px;color:#000;">GSE</div>
<div class="t" style="left:597.2px;top:285.46px;font-size:16px;color:#000;">LUE</div>
<div class="t" style="left:677.2px;top:285.46px;font-size:16px;color:#000;">Vtot</div>
<div class="t" style="left:757.2px;top:285.46px;font-size:16px;color:#000;">Vy</div>
<div class="t" style="left:837.2px;top:285.46px;font-size:16px;color:#000;">Gamma</div>
<div class="t" style="left:917.2px;top:285.46px;font-size:16px;color:#000;">Pitch</div>
<div class="t" style="left:997.2px;top:285.46px;font-size:16px;color:#000;">Roll</div>
<div class="t" style="left:1077.2px;top:285.46px;font-size:16px;color:#000;">Yaw</div>
<div class="t" style="left:1157.2px;top:285.46px;font-size:16px;color:#000;letter-spacing:0.2px;">Step</div>
<div class="t" style="right:1211px;top:309.96px;font-size:16px;color:#000;text-align:right;">0</div>
<div class="t" style="right:1131px;top:309.96px;font-size:16px;color:#000;text-align:right;">0.857</div>
<div class="t" style="right:1051px;top:309.96px;font-size:16px;color:#000;text-align:right;">1738.6</div>
<div class="t" style="right:971px;top:309.96px;font-size:16px;color:#000;text-align:right;">53.8</div>
<div class="t" style="right:891px;top:309.96px;font-size:16px;color:#000;text-align:right;">318.9</div>
<div class="t" style="right:811px;top:309.96px;font-size:16px;color:#000;text-align:right;">8.94</div>
<div class="t" style="right:731px;top:309.96px;font-size:16px;color:#000;text-align:right;">-0.15</div>
<div class="t" style="right:651px;top:309.96px;font-size:16px;color:#000;text-align:right;">7</div>
<div class="t" style="right:571px;top:309.96px;font-size:16px;color:#000;text-align:right;">140.2</div>
<div class="t" style="right:491px;top:309.96px;font-size:16px;color:#000;text-align:right;">-658.9</div>
<div class="t" style="right:411px;top:309.96px;font-size:16px;color:#000;text-align:right;">42.6</div>
<div class="t" style="right:331px;top:309.96px;font-size:16px;color:#000;text-align:right;">4.9</div>
<div class="t" style="right:251px;top:309.96px;font-size:16px;color:#000;text-align:right;">-35.9</div>
<div class="t" style="right:171px;top:309.96px;font-size:16px;color:#000;text-align:right;">0</div>
<div class="t" style="left:1157.2px;top:309.46px;font-size:16px;color:#000;letter-spacing:0.2px;">Turn Final</div>
<div class="t" style="right:1211px;top:333.96px;font-size:16px;color:#000;text-align:right;">0.6</div>
<div class="t" style="right:1131px;top:333.96px;font-size:16px;color:#000;text-align:right;">0.841</div>
<div class="t" style="right:1051px;top:333.96px;font-size:16px;color:#000;text-align:right;">1707.6</div>
<div class="t" style="right:971px;top:333.96px;font-size:16px;color:#000;text-align:right;">81.2</div>
<div class="t" style="right:891px;top:333.96px;font-size:16px;color:#000;text-align:right;">312.5</div>
<div class="t" style="right:811px;top:333.96px;font-size:16px;color:#000;text-align:right;">8.86</div>
<div class="t" style="right:731px;top:333.96px;font-size:16px;color:#000;text-align:right;">-0.15</div>
<div class="t" style="right:651px;top:333.96px;font-size:16px;color:#000;text-align:right;">6</div>
<div class="t" style="right:571px;top:333.96px;font-size:16px;color:#000;text-align:right;">140.3</div>
<div class="t" style="right:491px;top:333.96px;font-size:16px;color:#000;text-align:right;">-619.4</div>
<div class="t" style="right:411px;top:333.96px;font-size:16px;color:#000;text-align:right;">39.2</div>
<div class="t" style="right:331px;top:333.96px;font-size:16px;color:#000;text-align:right;">4.9</div>
<div class="t" style="right:251px;top:333.96px;font-size:16px;color:#000;text-align:right;">-36.9</div>
<div class="t" style="right:171px;top:333.96px;font-size:16px;color:#000;text-align:right;">0</div>
<div class="t" style="left:1157.2px;top:333.46px;font-size:16px;color:#000;letter-spacing:0.2px;">Groove X</div>
<div class="t" style="right:1211px;top:357.96px;font-size:16px;color:#000;text-align:right;">1.2</div>
<div class="t" style="right:1131px;top:357.96px;font-size:16px;color:#000;text-align:right;">0.824</div>
<div class="t" style="right:1051px;top:357.96px;font-size:16px;color:#000;text-align:right;">1674.9</div>
<div class="t" style="right:971px;top:357.96px;font-size:16px;color:#000;text-align:right;">106.5</div>
<div class="t" style="right:891px;top:357.96px;font-size:16px;color:#000;text-align:right;">306.4</div>
<div class="t" style="right:811px;top:357.96px;font-size:16px;color:#000;text-align:right;">8.83</div>
<div class="t" style="right:731px;top:357.96px;font-size:16px;color:#000;text-align:right;">-0.15</div>
<div class="t" style="right:651px;top:357.96px;font-size:16px;color:#000;text-align:right;">5.03</div>
<div class="t" style="right:571px;top:357.96px;font-size:16px;color:#000;text-align:right;">140.4</div>
<div class="t" style="right:491px;top:357.96px;font-size:16px;color:#000;text-align:right;">-591.5</div>
<div class="t" style="right:411px;top:357.96px;font-size:16px;color:#000;text-align:right;">35.7</div>
<div class="t" style="right:331px;top:357.96px;font-size:16px;color:#000;text-align:right;">4.9</div>
<div class="t" style="right:251px;top:357.96px;font-size:16px;color:#000;text-align:right;">-37.9</div>
<div class="t" style="right:171px;top:357.96px;font-size:16px;color:#000;text-align:right;">0</div>
<div class="t" style="left:1157.2px;top:357.46px;font-size:16px;color:#000;letter-spacing:0.2px;">Groove X</div>
<div class="t" style="right:1211px;top:381.96px;font-size:16px;color:#000;text-align:right;">1.8</div>
<div class="t" style="right:1131px;top:381.96px;font-size:16px;color:#000;text-align:right;">0.807</div>
<div class="t" style="right:1051px;top:381.96px;font-size:16px;color:#000;text-align:right;">1640.8</div>
<div class="t" style="right:971px;top:381.96px;font-size:16px;color:#000;text-align:right;">129.5</div>
<div class="t" style="right:891px;top:381.96px;font-size:16px;color:#000;text-align:right;">300.6</div>
<div class="t" style="right:811px;top:381.96px;font-size:16px;color:#000;text-align:right;">8.72</div>
<div class="t" style="right:731px;top:381.96px;font-size:16px;color:#000;text-align:right;">-0.15</div>
<div class="t" style="right:651px;top:381.96px;font-size:16px;color:#000;text-align:right;">4.1</div>
<div class="t" style="right:571px;top:381.96px;font-size:16px;color:#000;text-align:right;">140.1</div>
<div class="t" style="right:491px;top:381.96px;font-size:16px;color:#000;text-align:right;">-577.8</div>
<div class="t" style="right:411px;top:381.96px;font-size:16px;color:#000;text-align:right;">32.1</div>
<div class="t" style="right:331px;top:381.96px;font-size:16px;color:#000;text-align:right;">4.8</div>
<div class="t" style="right:251px;top:381.96px;font-size:16px;color:#000;text-align:right;">-38.9</div>
<div class="t" style="right:171px;top:381.96px;font-size:16px;color:#000;text-align:right;">0</div>
<div class="t" style="left:1157.2px;top:381.46px;font-size:16px;color:#000;letter-spacing:0.2px;">Groove X</div>
<div class="t" style="right:1211px;top:405.96px;font-size:16px;color:#000;text-align:right;">2.4</div>
<div class="t" style="right:1131px;top:405.96px;font-size:16px;color:#000;text-align:right;">0.789</div>
<div class="t" style="right:1051px;top:405.96px;font-size:16px;color:#000;text-align:right;">1605.4</div>
<div class="t" style="right:971px;top:405.96px;font-size:16px;color:#000;text-align:right;">150.1</div>
<div class="t" style="right:891px;top:405.96px;font-size:16px;color:#000;text-align:right;">294.8</div>
<div class="t" style="right:811px;top:405.96px;font-size:16px;color:#000;text-align:right;">8.27</div>
<div class="t" style="right:731px;top:405.96px;font-size:16px;color:#000;text-align:right;">-0.14</div>
<div class="t" style="right:651px;top:405.96px;font-size:16px;color:#000;text-align:right;">3.22</div>
<div class="t" style="right:571px;top:405.96px;font-size:16px;color:#000;text-align:right;">139.5</div>
<div class="t" style="right:491px;top:405.96px;font-size:16px;color:#000;text-align:right;">-589.9</div>
<div class="t" style="right:411px;top:405.96px;font-size:16px;color:#000;text-align:right;">28.9</div>
<div class="t" style="right:331px;top:405.96px;font-size:16px;color:#000;text-align:right;">4.5</div>
<div class="t" style="right:251px;top:405.96px;font-size:16px;color:#000;text-align:right;">-39</div>
<div class="t" style="right:171px;top:405.96px;font-size:16px;color:#000;text-align:right;">0</div>
<div class="t" style="left:1157.2px;top:405.46px;font-size:16px;color:#000;letter-spacing:0.2px;">Groove X</div>
<div class="t" style="right:1211px;top:429.96px;font-size:16px;color:#000;text-align:right;">3</div>
<div class="t" style="right:1131px;top:429.96px;font-size:16px;color:#000;text-align:right;">0.77</div>
<div class="t" style="right:1051px;top:429.96px;font-size:16px;color:#000;text-align:right;">1568.9</div>
<div class="t" style="right:971px;top:429.96px;font-size:16px;color:#000;text-align:right;">168.1</div>
<div class="t" style="right:891px;top:429.96px;font-size:16px;color:#000;text-align:right;">288.7</div>
<div class="t" style="right:811px;top:429.96px;font-size:16px;color:#000;text-align:right;">8.14</div>
<div class="t" style="right:731px;top:429.96px;font-size:16px;color:#000;text-align:right;">-0.13</div>
<div class="t" style="right:651px;top:429.96px;font-size:16px;color:#000;text-align:right;">2.39</div>
<div class="t" style="right:571px;top:429.96px;font-size:16px;color:#000;text-align:right;">139</div>
<div class="t" style="right:491px;top:429.96px;font-size:16px;color:#000;text-align:right;">-629.2</div>
<div class="t" style="right:411px;top:429.96px;font-size:16px;color:#000;text-align:right;">25.5</div>
<div class="t" style="right:331px;top:429.96px;font-size:16px;color:#000;text-align:right;">4.2</div>
<div class="t" style="right:251px;top:429.96px;font-size:16px;color:#000;text-align:right;">-39.4</div>
<div class="t" style="right:171px;top:429.96px;font-size:16px;color:#000;text-align:right;">0</div>
<div class="t" style="left:1157.2px;top:429.46px;font-size:16px;color:#000;letter-spacing:0.2px;">Groove X</div>
<div class="t" style="right:1211px;top:453.96px;font-size:16px;color:#000;text-align:right;">3.6</div>
<div class="t" style="right:1131px;top:453.96px;font-size:16px;color:#000;text-align:right;">0.751</div>
<div class="t" style="right:1051px;top:453.96px;font-size:16px;color:#000;text-align:right;">1531.4</div>
<div class="t" style="right:971px;top:453.96px;font-size:16px;color:#000;text-align:right;">183.6</div>
<div class="t" style="right:891px;top:453.96px;font-size:16px;color:#000;text-align:right;">282.1</div>
<div class="t" style="right:811px;top:453.96px;font-size:16px;color:#000;text-align:right;">8.26</div>
<div class="t" style="right:731px;top:453.96px;font-size:16px;color:#000;text-align:right;">-0.13</div>
<div class="t" style="right:651px;top:453.96px;font-size:16px;color:#000;text-align:right;">1.62</div>
<div class="t" style="right:571px;top:453.96px;font-size:16px;color:#000;text-align:right;">138.5</div>
<div class="t" style="right:491px;top:453.96px;font-size:16px;color:#000;text-align:right;">-676</div>
<div class="t" style="right:411px;top:453.96px;font-size:16px;color:#000;text-align:right;">21.9</div>
<div class="t" style="right:331px;top:453.96px;font-size:16px;color:#000;text-align:right;">4</div>
<div class="t" style="right:251px;top:453.96px;font-size:16px;color:#000;text-align:right;">-39.9</div>
<div class="t" style="right:171px;top:453.96px;font-size:16px;color:#000;text-align:right;">0</div>
<div class="t" style="left:1157.2px;top:453.46px;font-size:16px;color:#000;letter-spacing:0.2px;">Groove X</div>
<div class="t" style="right:1211px;top:477.96px;font-size:16px;color:#000;text-align:right;">4.2</div>
<div class="t" style="right:1131px;top:477.96px;font-size:16px;color:#000;text-align:right;">0.731</div>
<div class="t" style="right:1051px;top:477.96px;font-size:16px;color:#000;text-align:right;">1493.2</div>
<div class="t" style="right:971px;top:477.96px;font-size:16px;color:#000;text-align:right;">196.4</div>
<div class="t" style="right:891px;top:477.96px;font-size:16px;color:#000;text-align:right;">275.1</div>
<div class="t" style="right:811px;top:477.96px;font-size:16px;color:#000;text-align:right;">8.25</div>
<div class="t" style="right:731px;top:477.96px;font-size:16px;color:#000;text-align:right;">-0.39</div>
<div class="t" style="right:651px;top:477.96px;font-size:16px;color:#000;text-align:right;">-1.71</div>
<div class="t" style="right:571px;top:477.96px;font-size:16px;color:#000;text-align:right;">138.1</div>
<div class="t" style="right:491px;top:477.96px;font-size:16px;color:#000;text-align:right;">-726.5</div>
<div class="t" style="right:411px;top:477.96px;font-size:16px;color:#000;text-align:right;">18.2</div>
<div class="t" style="right:331px;top:477.96px;font-size:16px;color:#000;text-align:right;">3.8</div>
<div class="t" style="right:251px;top:477.96px;font-size:16px;color:#000;text-align:right;">-40.5</div>
<div class="t" style="right:171px;top:477.96px;font-size:16px;color:#000;text-align:right;">0</div>
<div class="t" style="left:1157.2px;top:477.46px;font-size:16px;color:#000;letter-spacing:0.2px;">Groove X</div>
<div class="t" style="right:1211px;top:501.96px;font-size:16px;color:#000;text-align:right;">4.8</div>
<div class="t" style="right:1131px;top:501.96px;font-size:16px;color:#000;text-align:right;">0.712</div>
<div class="t" style="right:1051px;top:501.96px;font-size:16px;color:#000;text-align:right;">1454.4</div>
<div class="t" style="right:971px;top:501.96px;font-size:16px;color:#000;text-align:right;">206.5</div>
<div class="t" style="right:891px;top:501.96px;font-size:16px;color:#000;text-align:right;">267.5</div>
<div class="t" style="right:811px;top:501.96px;font-size:16px;color:#000;text-align:right;">8.25</div>
<div class="t" style="right:731px;top:501.96px;font-size:16px;color:#000;text-align:right;">-0.14</div>
<div class="t" style="right:651px;top:501.96px;font-size:16px;color:#000;text-align:right;">0.27</div>
<div class="t" style="right:571px;top:501.96px;font-size:16px;color:#000;text-align:right;">137.7</div>
<div class="t" style="right:491px;top:501.96px;font-size:16px;color:#000;text-align:right;">-793.2</div>
<div class="t" style="right:411px;top:501.96px;font-size:16px;color:#000;text-align:right;">14.6</div>
<div class="t" style="right:331px;top:501.96px;font-size:16px;color:#000;text-align:right;">3.4</div>
<div class="t" style="right:251px;top:501.96px;font-size:16px;color:#000;text-align:right;">-41.2</div>
<div class="t" style="right:171px;top:501.96px;font-size:16px;color:#000;text-align:right;">0</div>
<div class="t" style="left:1157.2px;top:501.46px;font-size:16px;color:#000;letter-spacing:0.2px;">Groove In the Middle</div>
<div class="t" style="right:1211px;top:525.96px;font-size:16px;color:#000;text-align:right;">5.4</div>
<div class="t" style="right:1131px;top:525.96px;font-size:16px;color:#000;text-align:right;">0.691</div>
<div class="t" style="right:1051px;top:525.96px;font-size:16px;color:#000;text-align:right;">1415.1</div>
<div class="t" style="right:971px;top:525.96px;font-size:16px;color:#000;text-align:right;">213.8</div>
<div class="t" style="right:891px;top:525.96px;font-size:16px;color:#000;text-align:right;">259.1</div>
<div class="t" style="right:811px;top:525.96px;font-size:16px;color:#000;text-align:right;">8.15</div>
<div class="t" style="right:731px;top:525.96px;font-size:16px;color:#000;text-align:right;">-0.15</div>
<div class="t" style="right:651px;top:525.96px;font-size:16px;color:#000;text-align:right;">-0.28</div>
<div class="t" style="right:571px;top:525.96px;font-size:16px;color:#000;text-align:right;">137.5</div>
<div class="t" style="right:491px;top:525.96px;font-size:16px;color:#000;text-align:right;">-876.2</div>
<div class="t" style="right:411px;top:525.96px;font-size:16px;color:#000;text-align:right;">10.9</div>
<div class="t" style="right:331px;top:525.96px;font-size:16px;color:#000;text-align:right;">2.9</div>
<div class="t" style="right:251px;top:525.96px;font-size:16px;color:#000;text-align:right;">-41.9</div>
<div class="t" style="right:171px;top:525.96px;font-size:16px;color:#000;text-align:right;">0</div>
<div class="t" style="left:1157.2px;top:525.46px;font-size:16px;color:#000;letter-spacing:0.2px;">Groove In the Middle</div>
<div class="t" style="right:1211px;top:549.96px;font-size:16px;color:#000;text-align:right;">6</div>
<div class="t" style="right:1131px;top:549.96px;font-size:16px;color:#000;text-align:right;">0.67</div>
<div class="t" style="right:1051px;top:549.96px;font-size:16px;color:#000;text-align:right;">1375.4</div>
<div class="t" style="right:971px;top:549.96px;font-size:16px;color:#000;text-align:right;">218.2</div>
<div class="t" style="right:891px;top:549.96px;font-size:16px;color:#000;text-align:right;">249.7</div>
<div class="t" style="right:811px;top:549.96px;font-size:16px;color:#000;text-align:right;">8.12</div>
<div class="t" style="right:731px;top:549.96px;font-size:16px;color:#000;text-align:right;">-0.18</div>
<div class="t" style="right:651px;top:549.96px;font-size:16px;color:#000;text-align:right;">-0.75</div>
<div class="t" style="right:571px;top:549.96px;font-size:16px;color:#000;text-align:right;">137.5</div>
<div class="t" style="right:491px;top:549.96px;font-size:16px;color:#000;text-align:right;">-991.5</div>
<div class="t" style="right:411px;top:549.96px;font-size:16px;color:#000;text-align:right;">7.5</div>
<div class="t" style="right:331px;top:549.96px;font-size:16px;color:#000;text-align:right;">2.6</div>
<div class="t" style="right:251px;top:549.96px;font-size:16px;color:#000;text-align:right;">-41.2</div>
<div class="t" style="right:171px;top:549.96px;font-size:16px;color:#000;text-align:right;">0</div>
<div class="t" style="left:1157.2px;top:549.46px;font-size:16px;color:#000;letter-spacing:0.2px;">Groove In the Middle</div>
<div class="t" style="right:1211px;top:573.96px;font-size:16px;color:#000;text-align:right;">6.6</div>
<div class="t" style="right:1131px;top:573.96px;font-size:16px;color:#000;text-align:right;">0.649</div>
<div class="t" style="right:1051px;top:573.96px;font-size:16px;color:#000;text-align:right;">1335.6</div>
<div class="t" style="right:971px;top:573.96px;font-size:16px;color:#000;text-align:right;">219.7</div>
<div class="t" style="right:891px;top:573.96px;font-size:16px;color:#000;text-align:right;">239.3</div>
<div class="t" style="right:811px;top:573.96px;font-size:16px;color:#000;text-align:right;">8.02</div>
<div class="t" style="right:731px;top:573.96px;font-size:16px;color:#000;text-align:right;">-0.22</div>
<div class="t" style="right:651px;top:573.96px;font-size:16px;color:#000;text-align:right;">-1.13</div>
<div class="t" style="right:571px;top:573.96px;font-size:16px;color:#000;text-align:right;">137.6</div>
<div class="t" style="right:491px;top:573.96px;font-size:16px;color:#000;text-align:right;">-1075.3</div>
<div class="t" style="right:411px;top:573.96px;font-size:16px;color:#000;text-align:right;">4.5</div>
<div class="t" style="right:331px;top:573.96px;font-size:16px;color:#000;text-align:right;">2.6</div>
<div class="t" style="right:251px;top:573.96px;font-size:16px;color:#000;text-align:right;">-37.1</div>
<div class="t" style="right:171px;top:573.96px;font-size:16px;color:#000;text-align:right;">0</div>
<div class="t" style="left:1157.2px;top:573.46px;font-size:16px;color:#000;letter-spacing:0.2px;">Groove In the Middle</div>
<div class="t" style="right:1211px;top:597.96px;font-size:16px;color:#000;text-align:right;">7.2</div>
<div class="t" style="right:1131px;top:597.96px;font-size:16px;color:#000;text-align:right;">0.628</div>
<div class="t" style="right:1051px;top:597.96px;font-size:16px;color:#000;text-align:right;">1295.7</div>
<div class="t" style="right:971px;top:597.96px;font-size:16px;color:#000;text-align:right;">218.8</div>
<div class="t" style="right:891px;top:597.96px;font-size:16px;color:#000;text-align:right;">228.5</div>
<div class="t" style="right:811px;top:597.96px;font-size:16px;color:#000;text-align:right;">7.92</div>
<div class="t" style="right:731px;top:597.96px;font-size:16px;color:#000;text-align:right;">-0.27</div>
<div class="t" style="right:651px;top:597.96px;font-size:16px;color:#000;text-align:right;">-1.41</div>
<div class="t" style="right:571px;top:597.96px;font-size:16px;color:#000;text-align:right;">137.7</div>
<div class="t" style="right:491px;top:597.96px;font-size:16px;color:#000;text-align:right;">-1070.2</div>
<div class="t" style="right:411px;top:597.96px;font-size:16px;color:#000;text-align:right;">1.9</div>
<div class="t" style="right:331px;top:597.96px;font-size:16px;color:#000;text-align:right;">2.8</div>
<div class="t" style="right:251px;top:597.96px;font-size:16px;color:#000;text-align:right;">-32.1</div>
<div class="t" style="right:171px;top:597.96px;font-size:16px;color:#000;text-align:right;">0</div>
<div class="t" style="left:1157.2px;top:597.46px;font-size:16px;color:#000;letter-spacing:0.2px;">Groove In the Middle</div>
<div class="t" style="right:1211px;top:621.96px;font-size:16px;color:#000;text-align:right;">7.8</div>
<div class="t" style="right:1131px;top:621.96px;font-size:16px;color:#000;text-align:right;">0.607</div>
<div class="t" style="right:1051px;top:621.96px;font-size:16px;color:#000;text-align:right;">1255.9</div>
<div class="t" style="right:971px;top:621.96px;font-size:16px;color:#000;text-align:right;">215.4</div>
<div class="t" style="right:891px;top:621.96px;font-size:16px;color:#000;text-align:right;">218.1</div>
<div class="t" style="right:811px;top:621.96px;font-size:16px;color:#000;text-align:right;">7.75</div>
<div class="t" style="right:731px;top:621.96px;font-size:16px;color:#000;text-align:right;">-0.31</div>
<div class="t" style="right:651px;top:621.96px;font-size:16px;color:#000;text-align:right;">-1.6</div>
<div class="t" style="right:571px;top:621.96px;font-size:16px;color:#000;text-align:right;">137.8</div>
<div class="t" style="right:491px;top:621.96px;font-size:16px;color:#000;text-align:right;">-1014</div>
<div class="t" style="right:411px;top:621.96px;font-size:16px;color:#000;text-align:right;">0.6</div>
<div class="t" style="right:331px;top:621.96px;font-size:16px;color:#000;text-align:right;">2.9</div>
<div class="t" style="right:251px;top:621.96px;font-size:16px;color:#000;text-align:right;">-28.7</div>
<div class="t" style="right:171px;top:621.96px;font-size:16px;color:#000;text-align:right;">0</div>
<div class="t" style="left:1157.2px;top:621.46px;font-size:16px;color:#000;letter-spacing:0.2px;">Groove In the Middle</div>
<div class="t" style="right:1211px;top:645.96px;font-size:16px;color:#000;text-align:right;">8.4</div>
<div class="t" style="right:1131px;top:645.96px;font-size:16px;color:#000;text-align:right;">0.585</div>
<div class="t" style="right:1051px;top:645.96px;font-size:16px;color:#000;text-align:right;">1216.3</div>
<div class="t" style="right:971px;top:645.96px;font-size:16px;color:#000;text-align:right;">210</div>
<div class="t" style="right:891px;top:645.96px;font-size:16px;color:#000;text-align:right;">208.4</div>
<div class="t" style="right:811px;top:645.96px;font-size:16px;color:#000;text-align:right;">7.43</div>
<div class="t" style="right:731px;top:645.96px;font-size:16px;color:#000;text-align:right;">-0.35</div>
<div class="t" style="right:651px;top:645.96px;font-size:16px;color:#000;text-align:right;">-1.69</div>
<div class="t" style="right:571px;top:645.96px;font-size:16px;color:#000;text-align:right;">137.9</div>
<div class="t" style="right:491px;top:645.96px;font-size:16px;color:#000;text-align:right;">-937.4</div>
<div class="t" style="right:411px;top:645.96px;font-size:16px;color:#000;text-align:right;">-2.7</div>
<div class="t" style="right:331px;top:645.96px;font-size:16px;color:#000;text-align:right;">3.1</div>
<div class="t" style="right:251px;top:645.96px;font-size:16px;color:#000;text-align:right;">-25</div>
<div class="t" style="right:171px;top:645.96px;font-size:16px;color:#000;text-align:right;">0</div>
<div class="t" style="left:1157.2px;top:645.46px;font-size:16px;color:#000;letter-spacing:0.2px;">Groove In the Middle</div>
<div class="r" style="left:32px;top:270px;width:83px;height:27px;background:transparent;box-sizing:border-box;border:2px solid #217346;"></div>
<div class="r" style="left:110px;top:292px;width:7px;height:7px;background:#ffffff;"></div>
<div class="r" style="left:111px;top:293px;width:5px;height:5px;background:#217346;"></div>
</body></html>
